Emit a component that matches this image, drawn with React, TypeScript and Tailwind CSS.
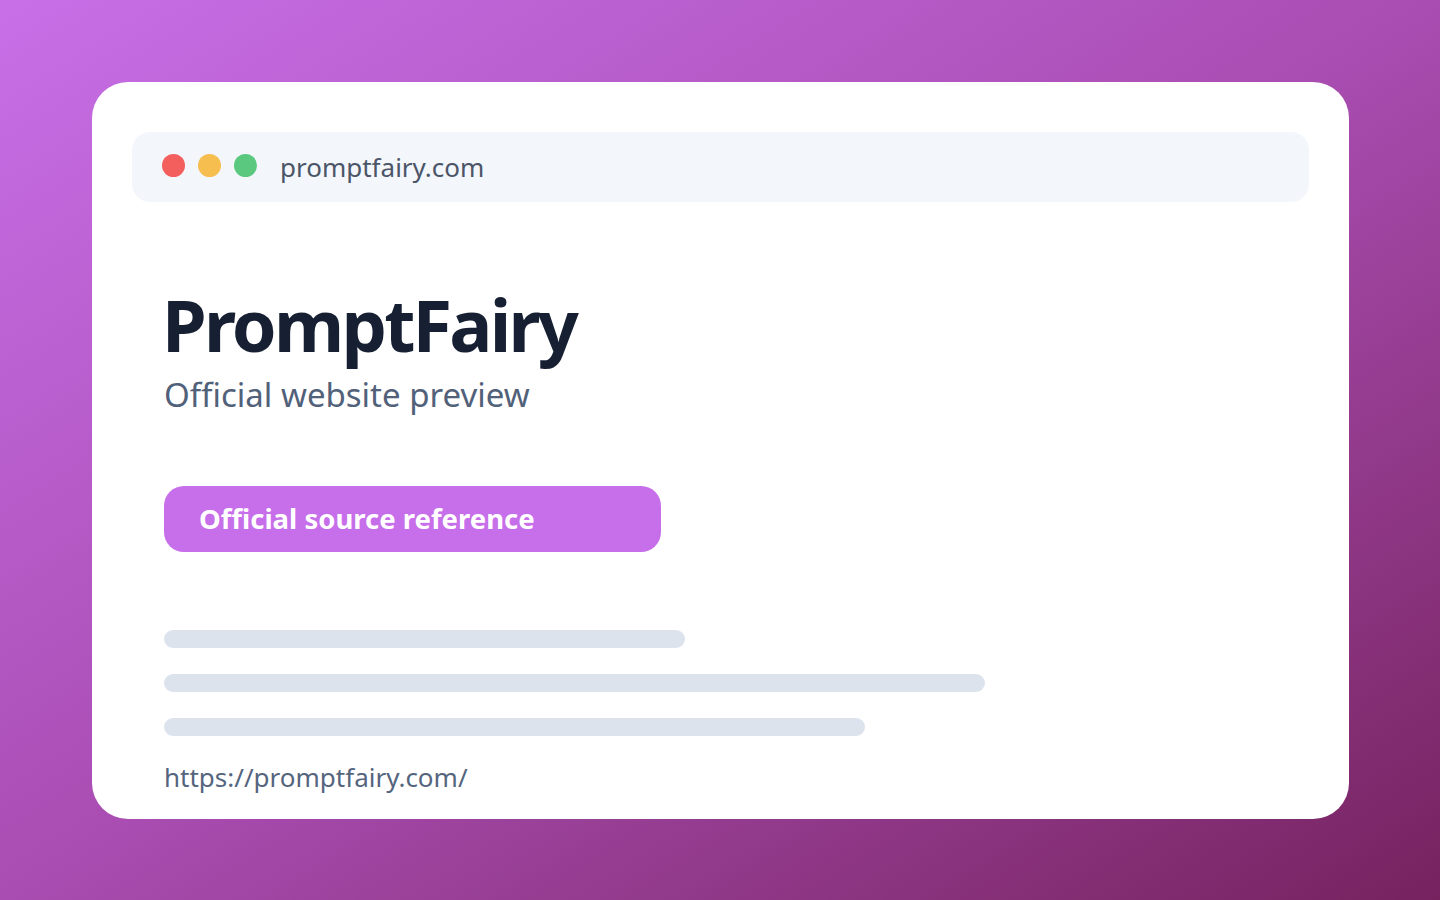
import React from 'react'

const font = {fontFamily: '"Noto Sans", "Open Sans", sans-serif'}

const bars = ['w-[521px]', 'w-[821px]', 'w-[701px]']

export default function App(): React.JSX.Element {
    return (
        <main className="w-[1440px] h-[900px] bg-gradient-to-br from-[#c86fe8] via-[#a94db2] to-[#76225f] flex items-start pt-[82px] pl-[92px]" style={font}>
            <div className="w-[1257px] h-[737px] bg-white rounded-[36px] px-10 pt-[50px] flex flex-col">
                <div className="h-[70px] bg-[#f3f6fb] rounded-[18px] flex items-center pl-[30px] gap-[13px]">
                    <span className="w-[23px] h-[23px] rounded-full bg-[#f25f5c] mb-[4px]"></span>
                    <span className="w-[23px] h-[23px] rounded-full bg-[#f6bd4f] mb-[4px]"></span>
                    <span className="w-[23px] h-[23px] rounded-full bg-[#5ac87f] mb-[4px]"></span>
                    <span className="ml-[10px] text-[26px] text-[#4b5567] leading-none">promptfairy.com</span>
                </div>
                <div className="px-8 flex flex-col">
                    <h1 className="mt-[86px] text-[72px] font-bold leading-none text-[#172033] -ml-[2px] tracking-[-2.8px]">PromptFairy</h1>
                    <p className="mt-[18px] text-[33px] leading-none text-[#52617a]">Official website preview</p>
                    <div className="mt-[75px] w-[497px] h-[66px] rounded-[20px] bg-[#c76eea] flex items-center pl-[35px]">
                        <span className="text-white font-bold text-[27.5px] leading-none">Official source reference</span>
                    </div>
                    <div className="mt-[78px] flex flex-col gap-[26px]">
                        {bars.map(w => (
                            <div key={w} className={`${w} h-[18px] rounded-full bg-[#dce3ed]`}></div>
                        ))}
                    </div>
                    <p className="mt-[28px] text-[26px] leading-none text-[#55657e]">https://promptfairy.com/</p>
                </div>
            </div>
        </main>
    )
}
